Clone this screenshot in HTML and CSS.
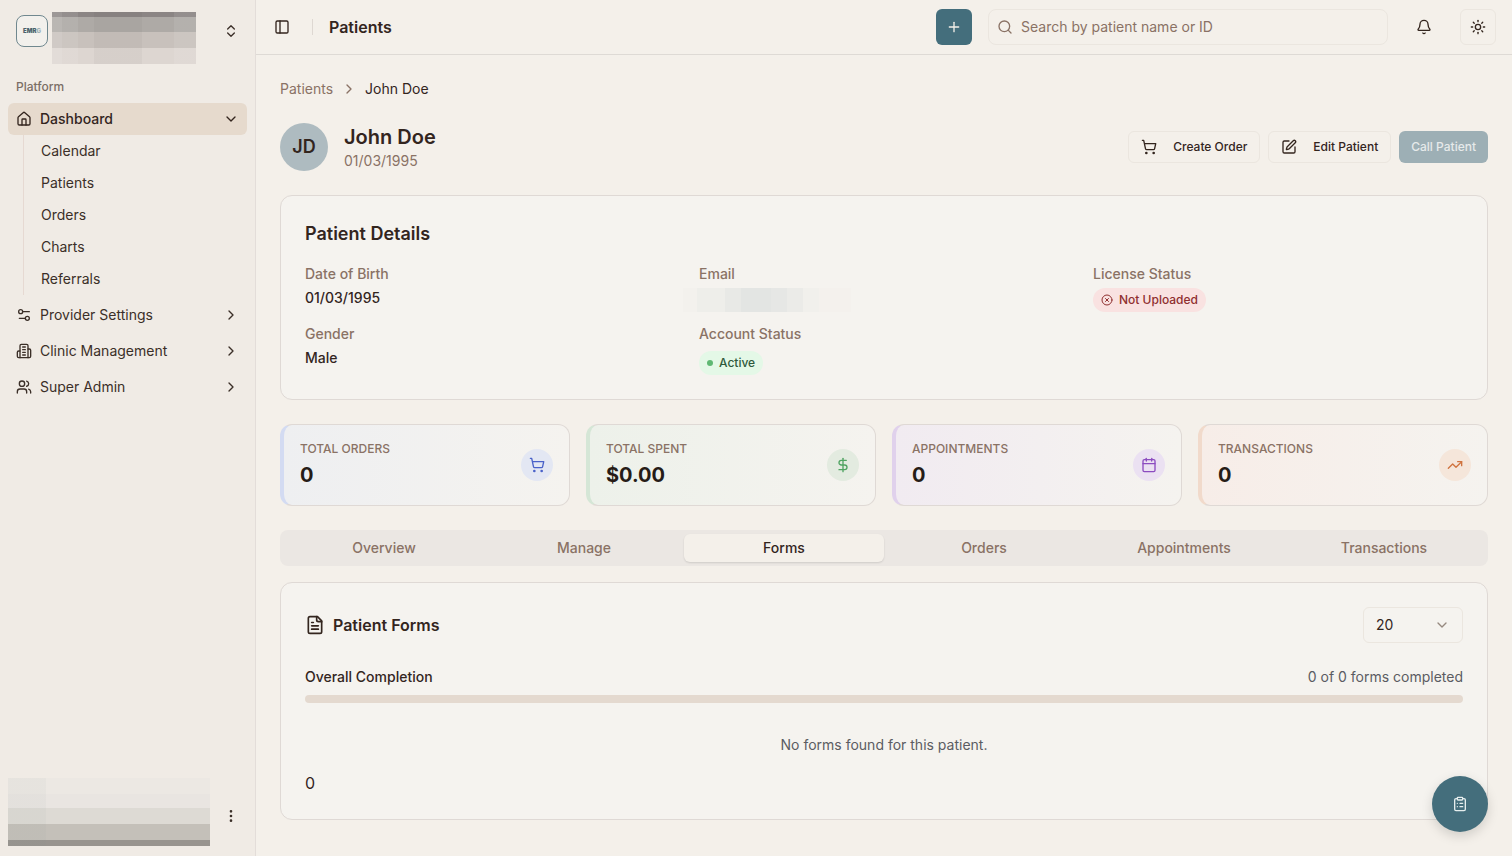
FILE: index.html
```html
<!DOCTYPE html>
<html lang="en">
<head>
    <meta charset="UTF-8">
    <meta name="viewport" content="width=device-width, initial-scale=1.0">
    <title>Patients - John Doe</title>
    <link rel="stylesheet" href="styles.css">
</head>
<body>

    <aside class="sidebar">
        <div class="workspace">
            <div class="logo">EMR<span>G</span></div>
            <div class="workspace-name"></div>
            <button class="icon-button" aria-label="Switch workspace">
                <svg class="icon" viewBox="0 0 24 24"><path d="m7 15 5 5 5-5"/><path d="m7 9 5-5 5 5"/></svg>
            </button>
        </div>

        <nav class="menu">
            <h2 class="menu-label">Platform</h2>
            <a href="#" class="menu-item active">
                <svg class="icon" viewBox="0 0 24 24"><path d="M15 21v-8a1 1 0 0 0-1-1h-4a1 1 0 0 0-1 1v8"/><path d="M3 10a2 2 0 0 1 .709-1.528l7-5.999a2 2 0 0 1 2.582 0l7 5.999A2 2 0 0 1 21 10v9a2 2 0 0 1-2 2H5a2 2 0 0 1-2-2z"/></svg>
                <span>Dashboard</span>
                <svg class="icon" viewBox="0 0 24 24"><path d="m6 9 6 6 6-6"/></svg>
            </a>
            <div class="submenu">
                <a href="#">Calendar</a>
                <a href="#">Patients</a>
                <a href="#">Orders</a>
                <a href="#">Charts</a>
                <a href="#">Referrals</a>
            </div>
            <a href="#" class="menu-item">
                <svg class="icon" viewBox="0 0 24 24"><path d="M20 7h-9"/><path d="M14 17H5"/><circle cx="17" cy="17" r="3"/><circle cx="7" cy="7" r="3"/></svg>
                <span>Provider Settings</span>
                <svg class="icon" viewBox="0 0 24 24"><path d="m9 18 6-6-6-6"/></svg>
            </a>
            <a href="#" class="menu-item">
                <svg class="icon" viewBox="0 0 24 24"><path d="M6 22V4a2 2 0 0 1 2-2h8a2 2 0 0 1 2 2v18Z"/><path d="M6 12H4a2 2 0 0 0-2 2v6a2 2 0 0 0 2 2h2"/><path d="M18 9h2a2 2 0 0 1 2 2v9a2 2 0 0 1-2 2h-2"/><path d="M10 6h4"/><path d="M10 10h4"/><path d="M10 14h4"/><path d="M10 18h4"/></svg>
                <span>Clinic Management</span>
                <svg class="icon" viewBox="0 0 24 24"><path d="m9 18 6-6-6-6"/></svg>
            </a>
            <a href="#" class="menu-item">
                <svg class="icon" viewBox="0 0 24 24"><path d="M16 21v-2a4 4 0 0 0-4-4H6a4 4 0 0 0-4 4v2"/><circle cx="9" cy="7" r="4"/><path d="M22 21v-2a4 4 0 0 0-3-3.87"/><path d="M16 3.13a4 4 0 0 1 0 7.75"/></svg>
                <span>Super Admin</span>
                <svg class="icon" viewBox="0 0 24 24"><path d="m9 18 6-6-6-6"/></svg>
            </a>
        </nav>

        <div class="account">
            <div class="account-name"></div>
            <button class="icon-button" aria-label="Account menu">
                <svg class="icon" viewBox="0 0 24 24"><circle cx="12" cy="12" r="1"/><circle cx="12" cy="5" r="1"/><circle cx="12" cy="19" r="1"/></svg>
            </button>
        </div>
    </aside>

    <div class="page">
        <header class="topbar">
            <button class="icon-button" aria-label="Toggle sidebar">
                <svg class="icon" viewBox="0 0 24 24"><rect width="18" height="18" x="3" y="3" rx="2"/><path d="M9 3v18"/></svg>
            </button>
            <div class="separator"></div>
            <h1>Patients</h1>
            <button class="add-button" aria-label="Add">
                <svg class="icon" viewBox="0 0 24 24"><path d="M5 12h14"/><path d="M12 5v14"/></svg>
            </button>
            <div class="search">
                <svg class="icon" viewBox="0 0 24 24"><circle cx="11" cy="11" r="8"/><path d="m21 21-4.3-4.3"/></svg>
                <input type="text" placeholder="Search by patient name or ID" aria-label="Search patients">
            </div>
            <button class="bell-button" aria-label="Notifications">
                <svg class="icon" viewBox="0 0 24 24"><path d="M10.268 21a2 2 0 0 0 3.464 0"/><path d="M3.262 15.326A1 1 0 0 0 4 17h16a1 1 0 0 0 .74-1.673C19.41 13.956 18 12.499 18 8A6 6 0 0 0 6 8c0 4.499-1.411 5.956-2.738 7.326"/></svg>
            </button>
            <button class="theme-button" aria-label="Theme">
                <svg class="icon" viewBox="0 0 24 24"><circle cx="12" cy="12" r="4"/><path d="M12 2v2"/><path d="M12 20v2"/><path d="m4.93 4.93 1.41 1.41"/><path d="m17.66 17.66 1.41 1.41"/><path d="M2 12h2"/><path d="M20 12h2"/><path d="m6.34 17.66-1.41 1.41"/><path d="m19.07 4.93-1.41 1.41"/></svg>
            </button>
        </header>

        <main>
            <nav class="breadcrumb" aria-label="Breadcrumb">
                <a href="#">Patients</a>
                <svg class="icon" viewBox="0 0 24 24"><path d="m9 18 6-6-6-6"/></svg>
                <span>John Doe</span>
            </nav>

            <div class="patient">
                <div class="avatar">JD</div>
                <div class="patient-name">
                    <h2>John Doe</h2>
                    <p>01/03/1995</p>
                </div>
                <div class="actions">
                    <button class="button">
                        <svg class="icon" viewBox="0 0 24 24"><circle cx="8" cy="21" r="1"/><circle cx="19" cy="21" r="1"/><path d="M2.05 2.05h2l2.66 12.42a2 2 0 0 0 2 1.58h9.78a2 2 0 0 0 1.95-1.57l1.65-7.43H5.12"/></svg>
                        Create Order
                    </button>
                    <button class="button">
                        <svg class="icon" viewBox="0 0 24 24"><path d="M12 3H5a2 2 0 0 0-2 2v14a2 2 0 0 0 2 2h14a2 2 0 0 0 2-2v-7"/><path d="M18.375 2.625a1 1 0 0 1 3 3l-9.013 9.014a2 2 0 0 1-.853.505l-2.873.84a.5.5 0 0 1-.62-.62l.84-2.873a2 2 0 0 1 .506-.852z"/></svg>
                        Edit Patient
                    </button>
                    <button class="button call" disabled>Call Patient</button>
                </div>
            </div>

            <section class="card">
                <h3>Patient Details</h3>
                <dl class="details">
                    <div>
                        <dt>Date of Birth</dt>
                        <dd>01/03/1995</dd>
                    </div>
                    <div>
                        <dt>Email</dt>
                        <dd class="email"></dd>
                    </div>
                    <div>
                        <dt>License Status</dt>
                        <dd>
                            <span class="badge badge-red">
                                <svg class="icon" viewBox="0 0 24 24"><circle cx="12" cy="12" r="10"/><path d="m15 9-6 6"/><path d="m9 9 6 6"/></svg>
                                Not Uploaded
                            </span>
                        </dd>
                    </div>
                    <div>
                        <dt>Gender</dt>
                        <dd>Male</dd>
                    </div>
                    <div>
                        <dt>Account Status</dt>
                        <dd class="account-status"><span class="badge badge-green"><i class="dot"></i>Active</span></dd>
                    </div>
                </dl>
            </section>

            <section class="stats">
                <div class="stat blue">
                    <div>
                        <p class="stat-label">TOTAL ORDERS</p>
                        <p class="stat-value">0</p>
                    </div>
                    <div class="stat-icon">
                        <svg class="icon" viewBox="0 0 24 24"><circle cx="8" cy="21" r="1"/><circle cx="19" cy="21" r="1"/><path d="M2.05 2.05h2l2.66 12.42a2 2 0 0 0 2 1.58h9.78a2 2 0 0 0 1.95-1.57l1.65-7.43H5.12"/></svg>
                    </div>
                </div>
                <div class="stat green">
                    <div>
                        <p class="stat-label">TOTAL SPENT</p>
                        <p class="stat-value">$0.00</p>
                    </div>
                    <div class="stat-icon">
                        <svg class="icon" viewBox="0 0 24 24"><path d="M12 2v20"/><path d="M17 5H9.5a3.5 3.5 0 0 0 0 7h5a3.5 3.5 0 0 1 0 7H6"/></svg>
                    </div>
                </div>
                <div class="stat purple">
                    <div>
                        <p class="stat-label">APPOINTMENTS</p>
                        <p class="stat-value">0</p>
                    </div>
                    <div class="stat-icon">
                        <svg class="icon" viewBox="0 0 24 24"><path d="M8 2v4"/><path d="M16 2v4"/><rect width="18" height="18" x="3" y="4" rx="2"/><path d="M3 10h18"/></svg>
                    </div>
                </div>
                <div class="stat orange">
                    <div>
                        <p class="stat-label">TRANSACTIONS</p>
                        <p class="stat-value">0</p>
                    </div>
                    <div class="stat-icon">
                        <svg class="icon" viewBox="0 0 24 24"><path d="m22 7-8.500 8.500-5-5L2 17"/><path d="M16 7h6v6"/></svg>
                    </div>
                </div>
            </section>

            <div class="tabs" role="tablist">
                <button role="tab">Overview</button>
                <button role="tab">Manage</button>
                <button role="tab" class="selected" aria-selected="true">Forms</button>
                <button role="tab">Orders</button>
                <button role="tab">Appointments</button>
                <button role="tab">Transactions</button>
            </div>

            <section class="card">
                <div class="forms-header">
                    <svg class="icon" viewBox="0 0 24 24"><path d="M15 2H6a2 2 0 0 0-2 2v16a2 2 0 0 0 2 2h12a2 2 0 0 0 2-2V7Z"/><path d="M14 2v4a2 2 0 0 0 2 2h4"/><path d="M10 9H8"/><path d="M16 13H8"/><path d="M16 17H8"/></svg>
                    <h4>Patient Forms</h4>
                    <div class="page-size">
                        <select aria-label="Forms per page">
                            <option>10</option>
                            <option selected>20</option>
                            <option>50</option>
                        </select>
                        <svg class="icon" viewBox="0 0 24 24"><path d="m6 9 6 6 6-6"/></svg>
                    </div>
                </div>
                <div class="completion">
                    <span>Overall Completion</span>
                    <span class="count">0 of 0 forms completed</span>
                </div>
                <div class="progress" role="progressbar" aria-label="Overall Completion" aria-valuenow="0" aria-valuemin="0" aria-valuemax="100"></div>
                <p class="empty">No forms found for this patient.</p>
                <p class="total">0</p>
            </section>
        </main>
    </div>

    <button class="fab" aria-label="Tasks">
        <svg class="icon" viewBox="0 0 24 24"><rect width="8" height="4" x="8" y="2" rx="1"/><path d="M16 4h2a2 2 0 0 1 2 2v14a2 2 0 0 1-2 2H6a2 2 0 0 1-2-2V6a2 2 0 0 1 2-2h2"/><path d="M12 11h4"/><path d="M12 16h4"/><path d="M8 11h.01"/><path d="M8 16h.01"/></svg>
    </button>

</body>
</html>
```
FILE: styles.css
```css
* {
    box-sizing: border-box;
}
body {
    margin: 0;
    display: flex;
    min-height: 100vh;
    background-color: #f4f0ea;
    color: #33251e;
    font-family: Inter, "Liberation Sans", sans-serif;
    font-size: 14px;
    line-height: 20px;
}
h1, h2, h3, h4, p, dl, dd {
    margin: 0;
}
a {
    color: inherit;
    text-decoration: none;
}
button, input, select {
    font: inherit;
    color: inherit;
}
button {
    display: flex;
    align-items: center;
    justify-content: center;
    padding: 0;
    border: none;
    background: none;
    cursor: pointer;
}
.icon {
    flex: none;
    width: 16px;
    height: 16px;
    fill: none;
    stroke: currentColor;
    stroke-width: 2;
    stroke-linecap: round;
    stroke-linejoin: round;
}
.icon-button {
    width: 16px;
    height: 32px;
}

/* Sidebar */
.sidebar {
    flex: none;
    display: flex;
    flex-direction: column;
    width: 256px;
    border-right: 1px solid #e3ddd9;
    background-color: #f0ebe5;
    color: #3b2f28;
}
.workspace {
    display: flex;
    gap: 4px;
    padding: 12px 16px 8px;
}
.logo {
    display: flex;
    align-items: center;
    justify-content: center;
    width: 32px;
    height: 32px;
    margin-top: 3px;
    border: 1px solid #70888f;
    border-radius: 8px;
    background-color: #f2f0ec;
    color: #4b626c;
    font-size: 6px;
    font-weight: 900;
}
.logo span {
    color: #9fb0b4;
}
.workspace-name {
    width: 144px;
    height: 52px;
    background:
        linear-gradient(90deg, rgba(255, 255, 255, 0.15) 10px, rgba(255, 255, 255, 0.08) 10px 26px, transparent 26px 42px, rgba(0, 0, 0, 0.03) 42px 90px, transparent 90px 122px, rgba(255, 255, 255, 0.08) 122px),
        linear-gradient(#8b8584 5px, #aeaaa6 5px 20px, #c8c1bc 20px 36px, #ddd6d1 36px);
}
.workspace .icon-button {
    margin: 3px 0 0 auto;
}
.menu {
    display: flex;
    flex-direction: column;
    gap: 4px;
    padding: 0 8px;
}
.menu-label {
    padding: 6px 8px 8px;
    margin-bottom: -4px;
    color: #7b6e66;
    font-size: 12px;
    line-height: 17px;
    font-weight: 500;
}
.menu-item {
    display: flex;
    align-items: center;
    gap: 8px;
    height: 32px;
    padding: 0 8px;
    border-radius: 6px;
}
.menu-item span {
    flex: 1;
}
.menu-item.active {
    background-color: #e6dacd;
    color: #33251e;
    font-weight: 500;
}
.submenu {
    display: flex;
    flex-direction: column;
    margin: -4px 15px 0;
    padding-left: 17px;
    border-left: 1px solid #e6d9d2;
    line-height: 32px;
}
.account {
    display: flex;
    align-items: flex-end;
    justify-content: space-between;
    margin-top: auto;
    padding: 8px 16px 10px 8px;
}
.account-name {
    width: 202px;
    height: 68px;
    background:
        linear-gradient(90deg, rgba(120, 140, 140, 0.05) 38px, transparent 38px),
        linear-gradient(#ece8e3 16px, #e9e5e1 16px 30px, #dddad4 30px 46px, #c4c0b9 46px 62px, #98948f 62px);
}
.account .icon-button {
    margin-bottom: 14px;
}

/* Top bar */
.page {
    flex: 1;
    min-width: 0;
}
.topbar {
    display: flex;
    align-items: center;
    gap: 16px;
    height: 55px;
    padding: 0 16px 0 18px;
    border-bottom: 1px solid #dedad5;
}
.topbar h1 {
    flex: 1;
    font-size: 16px;
    line-height: 24px;
    font-weight: 600;
}
.separator {
    width: 1px;
    height: 16px;
    margin-left: 6px;
    background-color: #ded8d2;
}
.add-button {
    width: 36px;
    height: 36px;
    border-radius: 6px;
    background-color: #446e7c;
    color: #f4f0e9;
}
.search {
    display: flex;
    align-items: center;
    gap: 8px;
    width: 400px;
    height: 36px;
    padding: 0 8px;
    border: 1px solid #ebe6df;
    border-radius: 8px;
    color: #8a7265;
}
.search input {
    flex: 1;
    min-width: 0;
    padding: 0;
    border: none;
    outline: none;
    background: none;
}
.search input::placeholder {
    color: #8a7265;
    opacity: 1;
}
.bell-button {
    width: 40px;
    height: 36px;
}
.theme-button {
    width: 36px;
    height: 36px;
    border: 1px solid #ebe6df;
    border-radius: 6px;
}

/* Patient header */
main {
    display: flex;
    flex-direction: column;
    gap: 24px;
    padding: 24px;
}
.breadcrumb {
    display: flex;
    align-items: center;
    gap: 8px;
}
.breadcrumb a, .breadcrumb .icon {
    color: #8a7265;
}
.patient {
    display: flex;
    align-items: center;
    gap: 16px;
}
.avatar {
    display: flex;
    align-items: center;
    justify-content: center;
    width: 48px;
    height: 48px;
    border-radius: 50%;
    background-color: #aebbc0;
    font-size: 18px;
    font-weight: 600;
}
.patient-name {
    flex: 1;
    color: #8a7265;
}
.patient-name h2 {
    color: #33251e;
    font-size: 20px;
    line-height: 28px;
    font-weight: 600;
}
.actions {
    display: flex;
    gap: 8px;
}
.button {
    gap: 16px;
    height: 32px;
    padding: 0 12px;
    border: 1px solid #ebe6df;
    border-radius: 6px;
    font-size: 12px;
    font-weight: 500;
}
.button.call {
    border: none;
    background-color: #9dafb5;
    color: #e6eaea;
}

/* Cards */
.card {
    padding: 24px;
    border: 1px solid #dfd9d5;
    border-radius: 12px;
    background-color: #f5f3ef;
}
.card h3 {
    margin-bottom: 16px;
    font-size: 18px;
    line-height: 28px;
    font-weight: 600;
}
.details {
    display: grid;
    grid-template-columns: repeat(3, 1fr);
    gap: 12px 24px;
}
.details dt {
    margin-bottom: 4px;
    color: #8a7265;
    font-weight: 500;
}
.details dd {
    font-weight: 500;
}
.details .email {
    width: 168px;
    height: 24px;
    margin-left: -16px;
    background: linear-gradient(90deg, #f3f1ed 14px, #eeeeea 14px 42px, #e8e9e6 42px 58px, #e3e5e3 58px 88px, #e6e7e5 88px 104px, #ebebe8 104px 120px, #f1f0ec 120px 136px, #f4f1ed 136px);
}
.details .account-status {
    padding-top: 3px;
}
.badge {
    display: flex;
    align-items: center;
    gap: 6px;
    width: fit-content;
    height: 24px;
    padding: 0 8px;
    border-radius: 12px;
    font-size: 12px;
    font-weight: 500;
}
.badge .icon {
    width: 12px;
    height: 12px;
}
.badge-red {
    background-color: #f9e2e1;
    color: #8f2f2f;
}
.badge-green {
    background-color: #e4f8e7;
    color: #2f5a3c;
}
.dot {
    width: 6px;
    height: 6px;
    border-radius: 50%;
    background-color: #5fb873;
}

/* Stats */
.stats {
    display: grid;
    grid-template-columns: repeat(4, 1fr);
    gap: 16px;
}
.stat {
    display: flex;
    align-items: center;
    justify-content: space-between;
    padding: 16px;
    border: 1px solid #dfd9d5;
    border-left-width: 4px;
    border-radius: 12px;
}
.stat-label {
    margin-bottom: 4px;
    color: #8a7265;
    font-size: 12px;
    line-height: 16px;
    font-weight: 500;
}
.stat-value {
    color: #261c17;
    font-size: 20px;
    line-height: 28px;
    font-weight: 700;
}
.stat-icon {
    display: flex;
    align-items: center;
    justify-content: center;
    width: 32px;
    height: 32px;
    border-radius: 50%;
}
.blue {
    border-left-color: #d3dbf2;
    background: linear-gradient(90deg, #eeeff1, #f5f3ef);
}
.blue .stat-icon {
    background-color: #e3e7f3;
    color: #4a62c9;
}
.green {
    border-left-color: #d5e6d6;
    background: linear-gradient(90deg, #edf1ea, #f5f3ef);
}
.green .stat-icon {
    background-color: #e3ebe0;
    color: #50a462;
}
.purple {
    border-left-color: #e0d1ec;
    background: linear-gradient(90deg, #f1ebf1, #f5f3ef);
}
.purple .stat-icon {
    background-color: #ebe1f2;
    color: #8c4cc0;
}
.orange {
    border-left-color: #f1dacb;
    background: linear-gradient(90deg, #f7ede8, #f5f3ef);
}
.orange .stat-icon {
    background-color: #f5e6da;
    color: #d07440;
}

/* Tabs */
.tabs {
    display: grid;
    grid-template-columns: repeat(6, 1fr);
    height: 36px;
    margin-bottom: -8px;
    padding: 4px;
    border-radius: 8px;
    background-color: #ebe7e3;
}
.tabs button {
    border-radius: 6px;
    color: #8a7265;
    font-weight: 500;
}
.tabs .selected {
    background-color: #f4f0ea;
    color: #33251e;
    box-shadow: 0 1px 2px rgba(0, 0, 0, 0.12);
}

/* Forms */
.forms-header {
    display: flex;
    align-items: center;
    gap: 8px;
    margin-bottom: 24px;
}
.forms-header > .icon {
    width: 20px;
    height: 20px;
}
.forms-header h4 {
    flex: 1;
    font-size: 16px;
    line-height: 24px;
    font-weight: 600;
}
.page-size {
    position: relative;
    width: 100px;
}
.page-size select {
    width: 100%;
    height: 36px;
    padding: 0 12px;
    border: 1px solid #ebe6df;
    border-radius: 6px;
    background: none;
    appearance: none;
}
.page-size .icon {
    position: absolute;
    top: 10px;
    right: 13px;
    color: #96897f;
    pointer-events: none;
}
.completion {
    display: flex;
    justify-content: space-between;
    margin-bottom: 8px;
    font-weight: 500;
}
.count {
    color: #5b5c62;
    font-weight: 400;
}
.progress {
    height: 8px;
    border-radius: 4px;
    background-color: #e4d9cf;
}
.empty {
    padding: 32px 0 16px;
    color: #5b5c62;
    text-align: center;
}
.total {
    font-size: 16px;
    line-height: 24px;
}
.fab {
    position: fixed;
    right: 24px;
    bottom: 24px;
    width: 56px;
    height: 56px;
    border-radius: 50%;
    background-color: #446e7c;
    color: #e6eeee;
    box-shadow: 0 4px 12px rgba(0, 0, 0, 0.15);
}
```
